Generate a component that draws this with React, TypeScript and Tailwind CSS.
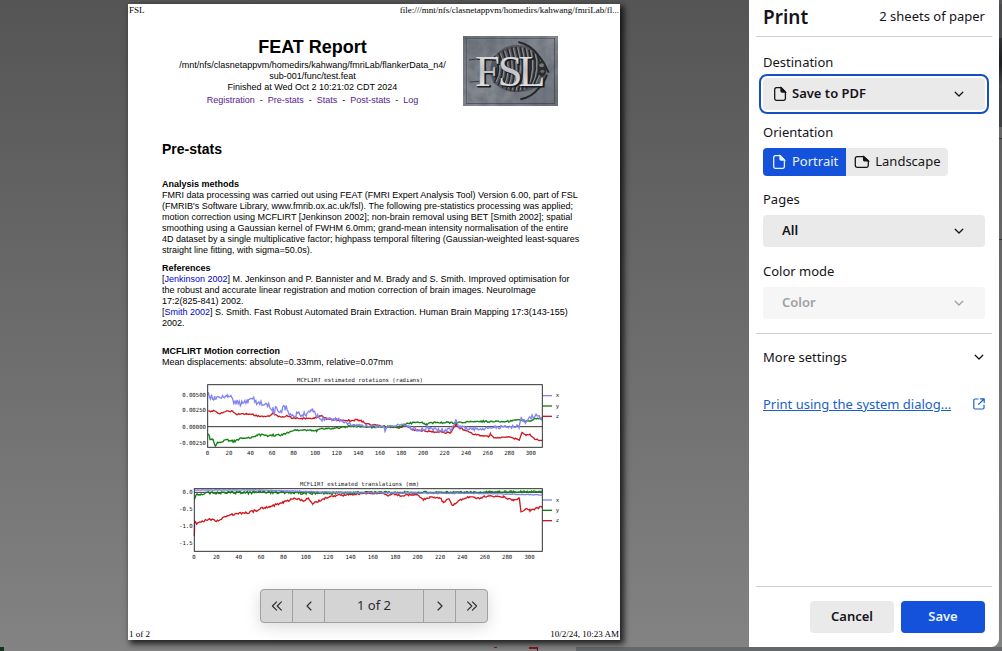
import type { ReactNode } from "react";

type Anchor = [x: number, y: number, jitter: number];

/** Interpolates between anchors and adds repeatable noise. */
function trace(anchors: Anchor[], seed: number): string {
  let state = seed;
  const random = () => {
    state = (state * 16807) % 2147483647;
    return state / 2147483647 - 0.5;
  };
  const points: string[] = [];
  for (let i = 0; i < anchors.length - 1; i++) {
    const [x0, y0, j0] = anchors[i];
    const [x1, y1] = anchors[i + 1];
    for (let x = x0; x < x1; x += 3.2) {
      const t = (x - x0) / (x1 - x0);
      points.push(`${x.toFixed(1)},${(y0 + (y1 - y0) * t + random() * j0).toFixed(1)}`);
    }
  }
  const last = anchors[anchors.length - 1];
  points.push(`${last[0]},${last[1]}`);
  return points.join(" ");
}

const RED = "#d0181c";
const GREEN = "#118011";
const BLUE = "#8484f0";

const rotX: Anchor[] = [
  [145, 76, 20], [165, 82, 20], [178, 90, 18], [190, 76, 18], [203, 74, 20], [215, 88, 20], [225, 98, 18],
  [245, 100, 14], [265, 96, 16], [278, 80, 16], [290, 98, 14], [310, 100, 12], [330, 106, 20], [340, 122, 26],
  [365, 116, 22], [375, 112, 22], [385, 128, 16], [410, 134, 16], [440, 132, 10], [457, 118, 10], [470, 138, 14],
  [490, 148, 12], [520, 146, 16], [550, 153, 10], [575, 164, 8], [600, 167, 8], [650, 170, 6], [672, 171, 6],
  [675, 186, 4], [680, 169, 5], [730, 164, 8], [750, 174, 10], [780, 180, 14], [810, 173, 12], [840, 182, 12],
  [875, 178, 8], [888, 150, 6], [897, 170, 12], [930, 178, 12], [970, 176, 10], [1010, 171, 12], [1078, 170, 10],
  [1084, 140, 8], [1090, 160, 12], [1110, 142, 16], [1125, 138, 14], [1147, 145, 8],
];
const rotZ: Anchor[] = [
  [145, 126, 8], [160, 121, 5], [175, 131, 4], [205, 122, 5], [218, 125, 5], [230, 133, 4], [260, 131, 5],
  [300, 138, 5], [325, 139, 5], [340, 130, 4], [355, 140, 5], [388, 138, 4], [395, 144, 4], [450, 146, 5],
  [485, 138, 5], [500, 147, 5], [560, 152, 5], [600, 150, 5], [620, 162, 4], [660, 168, 4], [720, 174, 5],
  [735, 164, 5], [760, 180, 5], [800, 183, 5], [830, 186, 5], [872, 188, 5], [880, 176, 4], [888, 162, 5],
  [900, 175, 5], [915, 180, 5], [940, 192, 5], [965, 197, 4], [985, 200, 4], [992, 192, 4], [1003, 204, 3],
  [1050, 201, 4], [1078, 210, 3], [1086, 188, 4], [1098, 195, 4], [1110, 194, 4], [1125, 208, 4], [1147, 212, 4],
];
const rotY: Anchor[] = [
  [145, 195, 8], [150, 206, 8], [160, 208, 6], [166, 230, 5], [173, 218, 6], [200, 211, 7], [225, 214, 5],
  [240, 205, 4], [270, 203, 5], [295, 194, 5], [320, 197, 6], [370, 194, 5], [400, 181, 4], [430, 180, 4],
  [470, 182, 5], [485, 176, 4], [520, 176, 4], [575, 168, 5], [610, 171, 6], [720, 170, 4], [745, 160, 5],
  [780, 157, 6], [800, 164, 5], [815, 158, 6], [900, 158, 5], [960, 154, 5], [1040, 155, 5], [1070, 149, 6],
  [1100, 154, 6], [1120, 148, 6], [1147, 143, 4],
];
const movX: Anchor[] = [
  [103, 45, 2], [300, 45, 2], [380, 48, 3], [480, 51, 3], [600, 53, 3], [800, 54, 2], [1000, 56, 2], [1147, 60, 1],
];
const movY: Anchor[] = [
  [103, 75, 4], [108, 60, 6], [120, 58, 8], [150, 53, 8], [400, 52, 9], [450, 55, 7], [600, 53, 7], [900, 52, 6],
  [1147, 50, 4],
];
const movZ: Anchor[] = [
  [103, 183, 0], [104, 138, 3], [110, 146, 5], [120, 140, 6], [150, 133, 5], [175, 138, 6], [200, 122, 6],
  [235, 116, 6], [270, 112, 7], [300, 102, 8], [330, 95, 6], [370, 82, 6], [405, 70, 5], [430, 77, 5], [445, 69, 4],
  [458, 86, 5], [480, 76, 6], [510, 64, 6], [550, 60, 6], [600, 56, 4], [670, 54, 4], [685, 61, 4], [700, 56, 4],
  [720, 62, 5], [770, 58, 4], [790, 74, 4], [810, 68, 6], [840, 68, 5], [850, 82, 5], [868, 71, 4], [877, 92, 4],
  [895, 78, 5], [920, 67, 6], [960, 70, 6], [975, 64, 5], [1030, 66, 6], [1060, 76, 5], [1078, 70, 3],
  [1083, 110, 4], [1100, 100, 6], [1110, 106, 6], [1147, 95, 4],
];

type ChartProps = {
  title: string;
  titleX: number;
  titleY: number;
  left: number;
  top: number;
  bottom: number;
  zero: number;
  step: number;
  legendTop: number;
  yTicks: [label: string, y: number][];
  series: { color: string; points: string }[];
  className: string;
  viewBox: string;
};

function Chart(p: ChartProps) {
  const right = 1147;
  return (
    <svg viewBox={p.viewBox} className={p.className} role="img" aria-label={p.title}>
      <g fontFamily="'DejaVu Sans Mono', monospace" fontSize="17" fill="#111">
        <text x={p.titleX} y={p.titleY}>{p.title}</text>
        {p.yTicks.map(([label, y]) => (
          <text key={label} x={p.left - 5} y={y + 6} textAnchor="end">{label}</text>
        ))}
        {Array.from({ length: 16 }, (_, i) => (
          <text key={i} x={p.left - 1 + i * p.step} y={p.bottom + 22} textAnchor="middle">{i * 20}</text>
        ))}
        {["x", "y", "z"].map((name, i) => (
          <text key={name} x="1187" y={p.legendTop + 5 + i * 31}>{name}</text>
        ))}
      </g>
      {[BLUE, GREEN, RED].map((color, i) => (
        <line key={color} x1={right} x2="1176" y1={p.legendTop + i * 31} y2={p.legendTop + i * 31} stroke={color} strokeWidth="4" />
      ))}
      <line x1={p.left} x2={right} y1={p.zero} y2={p.zero} stroke="#333" strokeWidth="3" />
      {p.series.map((s) => (
        <polyline key={s.color} points={s.points} fill="none" stroke={s.color} strokeWidth="4" />
      ))}
      <rect x={p.left} y={p.top} width={right - p.left} height={p.bottom - p.top} fill="none" stroke="#333" strokeWidth="3" />
    </svg>
  );
}

function FslLogo() {
  const ribs = Array.from({ length: 11 }, (_, i) => i);
  return (
    <svg viewBox="0 0 285 210" className="h-[70px] w-[95px] shrink-0" role="img" aria-label="FSL">
      <defs>
        <linearGradient id="stone" x1="0" y1="0" x2="1" y2="1">
          <stop offset="0" stopColor="#6d727a" />
          <stop offset="0.5" stopColor="#868a93" />
          <stop offset="1" stopColor="#6b717b" />
        </linearGradient>
        <linearGradient id="metal" x1="0" y1="0" x2="0" y2="1">
          <stop offset="0" stopColor="#f2f2f2" />
          <stop offset="0.5" stopColor="#bfc1c4" />
          <stop offset="1" stopColor="#f4f4f4" />
        </linearGradient>
        <filter id="grain">
          <feTurbulence type="fractalNoise" baseFrequency="0.04" numOctaves="4" seed="4" />
          <feColorMatrix values="0 0 0 0 0.1  0 0 0 0 0.11  0 0 0 0 0.13  0.9 0 0 0 -0.25" />
        </filter>
      </defs>
      <rect width="285" height="210" fill="url(#stone)" />
      <rect width="285" height="210" filter="url(#grain)" />
      <path d="M95 60 Q125 22 175 28 Q232 36 252 98 Q246 150 190 166 Q130 178 92 140 Q70 100 95 60Z" fill="#54565b" />
      {ribs.map((i) => (
        <g key={i} fill="none">
          <path d={`M${94 + i * 13} ${60 - Math.sin((i / 10) * 3) * 28} Q${118 + i * 12} 98 ${94 + i * 12} ${140 + Math.sin((i / 10) * 3) * 27}`} stroke="#26282c" strokeWidth="5" />
          <path d={`M${99 + i * 13} ${60 - Math.sin((i / 10) * 3) * 26} Q${123 + i * 12} 98 ${99 + i * 12} ${138 + Math.sin((i / 10) * 3) * 25}`} stroke="#8f9195" strokeWidth="3" />
        </g>
      ))}
      <path d="M166 18 Q202 26 226 58 Q246 82 257 110 M172 190 Q206 184 226 158 Q242 144 252 116" fill="none" stroke="#25272b" strokeWidth="6" />
      <path d="M18 72 L52 68 M20 138 L50 136" stroke="#3c3e43" strokeWidth="3" />
      <ellipse cx="237" cy="98" rx="13" ry="24" fill="#2a2c30" />
      <ellipse cx="236" cy="88" rx="7" ry="6" fill="#777a7e" />
      <ellipse cx="238" cy="106" rx="6" ry="5" fill="#66696e" />
      <g fontFamily="'Liberation Serif', serif" fontSize="134">
        <text x="40 108 170" y="154" fill="#1b1c1f" stroke="#1b1c1f" strokeWidth="3" aria-hidden="true">FSL</text>
        <text x="36 104 166" y="149" fill="url(#metal)">FSL</text>
      </g>
      <rect x="10" y="7" width="265" height="195" fill="none" stroke="#3e4147" strokeWidth="2" />
      <path d="M12 201 V9 H274" fill="none" stroke="#9599a0" strokeWidth="1" />
    </svg>
  );
}

function SheetIcon({ landscape = false }: { landscape?: boolean }) {
  return landscape ? (
    <svg viewBox="0 0 16 16" className="size-4" fill="none" stroke="currentColor" strokeWidth="1.3" aria-hidden="true">
      <path d="M3 2.7h6.8l4.5 4.2v4.7a1.7 1.7 0 0 1-1.7 1.7H3a1.7 1.7 0 0 1-1.7-1.7V4.4A1.7 1.7 0 0 1 3 2.7Z" />
      <path d="M9.6 2.7v3a1.2 1.2 0 0 0 1.2 1.2h3.5Z" fill="currentColor" />
    </svg>
  ) : (
    <svg viewBox="0 0 16 16" className="size-4" fill="none" stroke="currentColor" strokeWidth="1.3" aria-hidden="true">
      <path d="M4.3 1.7h5l4.1 4.2v6.800a1.600 1.600 0 0 1-1.600 1.600H4.300a1.600 1.600 0 0 1-1.600-1.600V3.300a1.600 1.600 0 0 1 1.600-1.600Z" />
      <path d="M9 1.7v3.2a1.1 1.1 0 0 0 1.1 1.1h3.3Z" fill="currentColor" />
    </svg>
  );
}

function Chevron({ className = "" }: { className?: string }) {
  return (
    <svg viewBox="0 0 12 12" className={`size-3 ${className}`} fill="none" stroke="currentColor" strokeWidth="1.3" strokeLinecap="round" strokeLinejoin="round" aria-hidden="true">
      <path d="M2.2 4.3 6 8l3.8-3.7" />
    </svg>
  );
}

function Angle({ double = false, flip = false }: { double?: boolean; flip?: boolean }) {
  return (
    <svg viewBox="0 0 12 12" className={flip ? "size-3 -scale-x-100" : "size-3"} fill="none" stroke="currentColor" strokeWidth="1.1" strokeLinecap="round" strokeLinejoin="round" aria-hidden="true">
      <path d={double ? "M5.6 1.8 1.4 6l4.2 4.2M10.4 1.8 6.2 6l4.2 4.2" : "M8 2 4 6l4 4"} />
    </svg>
  );
}

function Dropdown({ id, label, value, disabled = false, icon, className = "" }: {
  id: string;
  label: string;
  value: string;
  disabled?: boolean;
  icon?: ReactNode;
  className?: string;
}) {
  return (
    <div className="flex flex-col gap-[7px]">
      <label htmlFor={id} className="leading-[18px]">{label}</label>
      <div className={`relative rounded ${disabled ? "text-[#a0a0a3]" : ""} ${className}`}>
        <select
          id={id}
          disabled={disabled}
          className={`block h-8 w-full appearance-none rounded font-semibold outline-none ${icon ? "pl-[29px]" : "pl-[19px]"} ${disabled ? "bg-[#f6f6f6] opacity-100" : "bg-[#eaeaea]"}`}
        >
          <option>{value}</option>
        </select>
        {icon && <span className="pointer-events-none absolute top-2 left-[9px]">{icon}</span>}
        <Chevron className="pointer-events-none absolute top-[10px] right-5" />
      </div>
    </div>
  );
}

function Report() {
  const link = "text-[#551a8b]";
  return (
    <article className="flex min-h-[636px] w-[492px] flex-col bg-white text-[9px] leading-[11px] text-black shadow-[3px_3px_6px_1px_rgba(0,0,0,0.75)]">
      <header className="flex justify-between px-px pt-px font-['Liberation_Serif',serif] text-[9px]">
        <span>FSL</span>
        <span>file:///mnt/nfs/clasnetappvm/homedirs/kahwang/fmriLab/fl...</span>
      </header>
      <div className="flex-1 px-[34px] pt-5 font-['Liberation_Sans',sans-serif]">
        <div className="flex pr-7">
          <div className="flex-1 text-center">
            <h1 className="text-lg leading-[22px] font-bold">FEAT Report</h1>
            <p className="mt-0.5">
              /mnt/nfs/clasnetappvm/homedirs/kahwang/fmriLab/flankerData_n4/
              <br />
              sub-001/func/test.feat
              <br />
              Finished at Wed Oct 2 10:21:02 CDT 2024
            </p>
            <nav className="mt-0.5 flex justify-center gap-[5px]">
              <a href="#registration" className={link}>Registration</a>
              <span>-</span>
              <a href="#pre-stats" className={link}>Pre-stats</a>
              <span>-</span>
              <a href="#stats" className={link}>Stats</a>
              <span>-</span>
              <a href="#post-stats" className={link}>Post-stats</a>
              <span>-</span>
              <a href="#log" className={link}>Log</a>
            </nav>
          </div>
          <FslLogo />
        </div>
        <h2 id="pre-stats" className="mt-[35px] text-sm leading-4 font-bold">Pre-stats</h2>
        <section className="mt-[22px]">
          <h3 className="font-bold">Analysis methods</h3>
          <p>
            FMRI data processing was carried out using FEAT (FMRI Expert Analysis Tool) Version 6.00, part of FSL
            <br />
            (FMRIB's Software Library, www.fmrib.ox.ac.uk/fsl). The following pre-statistics processing was applied;
            <br />
            motion correction using MCFLIRT [Jenkinson 2002]; non-brain removal using BET [Smith 2002]; spatial
            <br />
            smoothing using a Gaussian kernel of FWHM 6.0mm; grand-mean intensity normalisation of the entire
            <br />
            4D dataset by a single multiplicative factor; highpass temporal filtering (Gaussian-weighted least-squares
            <br />
            straight line fitting, with sigma=50.0s).
          </p>
        </section>
        <section className="mt-[7px]">
          <h3 className="font-bold">References</h3>
          <p>
            [<a href="#jenkinson" className="text-[#0000cc]">Jenkinson 2002</a>] M. Jenkinson and P. Bannister and M. Brady and S. Smith. Improved optimisation for
            <br />
            the robust and accurate linear registration and motion correction of brain images. NeuroImage
            <br />
            17:2(825-841) 2002.
          </p>
          <p>
            [<a href="#smith" className="text-[#0000cc]">Smith 2002</a>] S. Smith. Fast Robust Automated Brain Extraction. Human Brain Mapping 17:3(143-155)
            <br />
            2002.
          </p>
        </section>
        <section className="mt-[17px]">
          <h3 className="font-bold">MCFLIRT Motion correction</h3>
          <p>Mean displacements: absolute=0.33mm, relative=0.07mm</p>
          <Chart
            title="MCFLIRT estimated rotations (radians)"
            titleX={411} titleY={37} left={143} top={44} bottom={232} zero={170} step={64.7} legendTop={77}
            yTicks={[["0.00500", 74], ["0.00250", 121], ["0.00000", 170], ["-0.00250", 218]]}
            series={[
              { color: RED, points: trace(rotZ, 71) },
              { color: GREEN, points: trace(rotY, 913) },
              { color: BLUE, points: trace(rotX, 4407) },
            ]}
            viewBox="6 0 1224 285"
            className="mt-0.5 block h-[95px] w-[408px]"
          />
          <Chart
            title="MCFLIRT estimated translations (mm)"
            titleX={420} titleY={34} left={103} top={41} bottom={229} zero={52} step={67.1} legendTop={75}
            yTicks={[["0.0", 52], ["-0.5", 102], ["-1.0", 152], ["-1.5", 203]]}
            series={[
              { color: RED, points: trace(movZ, 331) },
              { color: GREEN, points: trace(movY, 5501) },
              { color: BLUE, points: trace(movX, 127) },
            ]}
            viewBox="6 0 1224 270"
            className="mt-[10px] block h-[90px] w-[408px]"
          />
        </section>
      </div>
      <footer className="flex justify-between px-px font-['Liberation_Serif',serif] text-[9px]">
        <span>1 of 2</span>
        <span>10/2/24, 10:23 AM</span>
      </footer>
    </article>
  );
}

function Pager() {
  const cell = "flex w-8 items-center justify-center border-[#a1a1a1]";
  return (
    <div className="pointer-events-none absolute inset-x-0 bottom-6 flex justify-center pr-px">
      <nav aria-label="Preview pages" className="pointer-events-auto flex h-[34px] rounded border border-[#a1a1a1] bg-[#d4d4d4] text-[#2b2a33] shadow-[0_4px_16px_rgba(0,0,0,0.15)]">
        <button aria-label="First page" className={`${cell} border-r`}><Angle double /></button>
        <button aria-label="Previous page" className={`${cell} border-r`}><Angle /></button>
        <span className="flex w-[98px] items-center justify-center">1 of 2</span>
        <button aria-label="Next page" className={`${cell} border-l`}><Angle flip /></button>
        <button aria-label="Last page" className={`${cell} border-l`}><Angle double flip /></button>
      </nav>
    </div>
  );
}

function PrintPanel() {
  return (
    <form className="flex w-[250px] shrink-0 flex-col rounded-br-lg bg-white px-[7px] text-[#15141a]" onSubmit={(e) => e.preventDefault()}>
      <header className="flex h-[37px] items-center justify-between border-b border-[#cfcfd1] px-[7px] pb-0.5">
        <h2 className="text-[19px] leading-6 font-semibold">Print</h2>
        <p>2 sheets of paper</p>
      </header>
      <div className="flex flex-col px-[7px] pt-4 pb-[14px]">
        <Dropdown id="destination" label="Destination" value="Save to PDF" icon={<SheetIcon />} className="outline-2 outline-offset-2 outline-[#1450c4]" />
        <fieldset className="mt-[13px]">
          <legend className="leading-[18px]">Orientation</legend>
          <div className="mt-[7px] flex w-fit overflow-hidden rounded">
            <label className="flex h-7 items-center gap-[5px] bg-[#1552db] px-2 text-[#e8f4ff]">
              <input type="radio" name="orientation" defaultChecked className="sr-only" />
              <SheetIcon />
              Portrait
            </label>
            <label className="flex h-7 items-center gap-[5px] bg-[#eaeaea] px-2">
              <input type="radio" name="orientation" className="sr-only" />
              <SheetIcon landscape />
              Landscape
            </label>
          </div>
        </fieldset>
        <div className="mt-[14px] flex flex-col gap-[15px]">
          <Dropdown id="pages" label="Pages" value="All" />
          <Dropdown id="color" label="Color mode" value="Color" disabled />
        </div>
      </div>
      <div className="flex-1 border-t border-[#cfcfd1] px-[7px] pt-[13px]">
        <details>
          <summary className="flex cursor-pointer list-none items-center justify-between leading-5">
            More settings
            <Chevron />
          </summary>
        </details>
        <a href="#system-dialog" className="mt-[27px] flex items-center justify-between leading-5 text-[#1a5fc8]">
          <span className="underline">Print using the system dialog...</span>
          <svg viewBox="0 0 12 12" className="size-3" fill="none" stroke="currentColor" strokeWidth="1.2" strokeLinecap="round" strokeLinejoin="round" aria-hidden="true">
            <path d="M5 1H2A1.2 1.2 0 0 0 .8 2.2v7.6A1.2 1.2 0 0 0 2 11h7.8a1.2 1.2 0 0 0 1.2-1.2V7.2M7.4.8h3.8v3.8M11 1 5.6 6.4" />
          </svg>
        </a>
      </div>
      <footer className="flex justify-end gap-[7px] border-t border-[#cfcfd1] px-[7px] py-[14px] font-semibold">
        <button type="button" className="h-8 w-[84px] rounded bg-[#eaeaea]">Cancel</button>
        <button type="submit" className="h-8 w-[84px] rounded bg-[#1552db] text-[#e8f4ff]">Save</button>
      </footer>
    </form>
  );
}

export default function App() {
  return (
    <div className="flex min-h-screen flex-col bg-linear-to-b from-[#555555] to-[#838383] font-['Noto_Sans',sans-serif] text-[13px]">
      <div className="flex flex-1">
        <main className="relative flex flex-1 justify-center pt-1 pr-px pb-[7px]">
          <Report />
          <Pager />
        </main>
        <PrintPanel />
        <div className="flex w-[3px] flex-col" aria-hidden="true">
          <div className="mt-1 h-[34px] bg-[#4a4c50]" />
          <div className="h-[50px] bg-linear-to-b from-[#303236] via-[#1e1f22] to-[#45474b]" />
          <div className="h-[39px] bg-[#3f4145]" />
          <div className="h-3 border-b border-[#333] bg-[#666]" />
          <div className="mt-[100px] h-px bg-[#333]" />
        </div>
      </div>
      <div className="flex h-1 justify-between" aria-hidden="true">
        <div className="size-1 bg-[#12351a]" />
        <div className="ml-[490px] h-px w-[3px] bg-[#8c1518]" />
        <div className="ml-[32px] h-1 w-[9px] border-t-2 border-r border-t-[#8c1518] border-r-[#222]" />
        <div className="ml-[38px] flex-1 bg-[#66676a]" />
      </div>
    </div>
  );
}
